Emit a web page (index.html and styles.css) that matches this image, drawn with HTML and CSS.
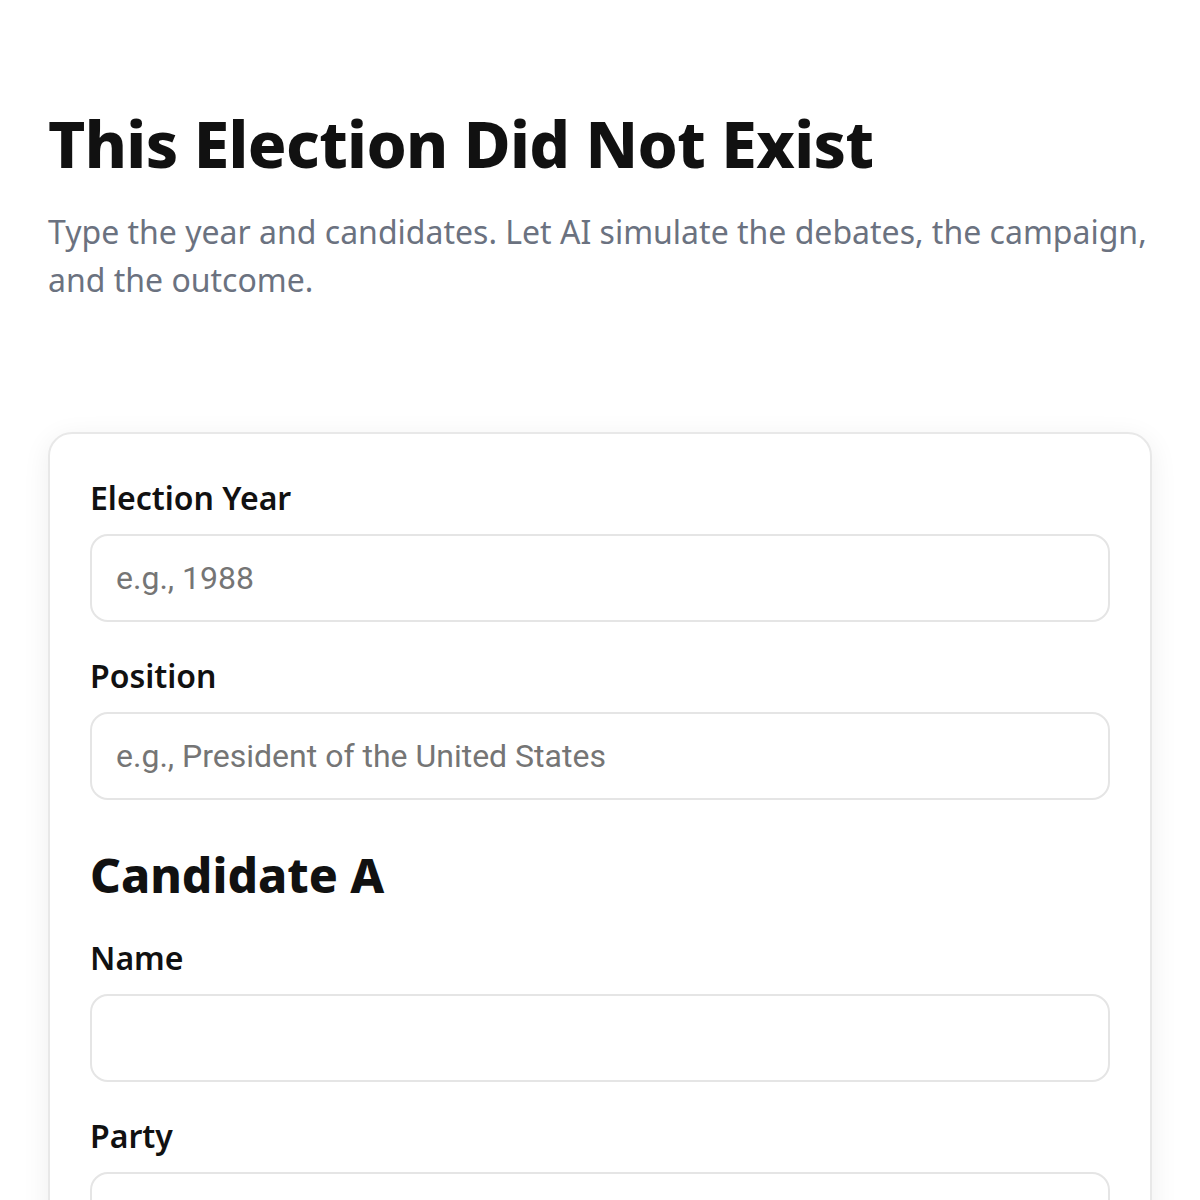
FILE: index.html
```html
<!DOCTYPE html>
<html lang="en">
<head>
<meta charset="utf-8">
<title>This Election Did Not Exist</title>
<link rel="stylesheet" href="styles.css">
</head>
<body>
<main class="page">
  <header class="hero">
    <h1 class="title">This Election Did Not Exist</h1>
    <p class="subtitle">Type the year and candidates. Let AI simulate the debates, the campaign, and the outcome.</p>
  </header>
  <form class="card">
    <div class="field">
      <label class="label" for="year">Election Year</label>
      <input class="input" id="year" type="text" placeholder="e.g., 1988">
    </div>
    <div class="field">
      <label class="label" for="position">Position</label>
      <input class="input" id="position" type="text" placeholder="e.g., President of the United States">
    </div>
    <h2 class="section-title">Candidate A</h2>
    <div class="field">
      <label class="label" for="name-a">Name</label>
      <input class="input" id="name-a" type="text">
    </div>
    <div class="field">
      <label class="label" for="party-a">Party</label>
      <input class="input" id="party-a" type="text">
    </div>
  </form>
</main>
</body>
</html>
```
FILE: styles.css
```css
* { box-sizing: border-box; }
html, body { margin: 0; padding: 0; background: #ffffff; }
body {
  font-family: "Noto Sans", "Open Sans", sans-serif;
  color: #111111;
}
.page {
  padding: 108px 48px 48px 48px;
}
.hero { margin-bottom: 128px; }
.title {
  margin: 0;
  font-size: 64px;
  line-height: 72px;
  font-weight: 800;
  letter-spacing: -0.6px;
  color: #111111;
}
.subtitle {
  margin: 28px 0 0 0;
  font-size: 32px;
  line-height: 48px;
  color: #6b7280;
}
.card {
  border: 2px solid #e8e8e8;
  border-radius: 24px;
  padding: 40px;
  background: #ffffff;
  box-shadow: 0 6px 28px rgba(0, 0, 0, 0.07);
  display: flex;
  flex-direction: column;
}
.field {
  display: flex;
  flex-direction: column;
  margin-bottom: 30px;
}
.label {
  font-size: 32px;
  line-height: 48px;
  font-weight: 600;
  color: #111111;
  margin-bottom: 12px;
}
.input {
  height: 88px;
  border: 2px solid #e5e5e5;
  border-radius: 18px;
  padding: 0 24px;
  font-family: Roboto, "Noto Sans", sans-serif;
  font-size: 32px;
  color: #111111;
  background: #ffffff;
  outline: none;
}
.input::placeholder { color: #757575; }
.section-title {
  margin: 13px 0 27px 0;
  font-size: 48px;
  line-height: 64px;
  font-weight: 800;
  color: #111111;
}
```
